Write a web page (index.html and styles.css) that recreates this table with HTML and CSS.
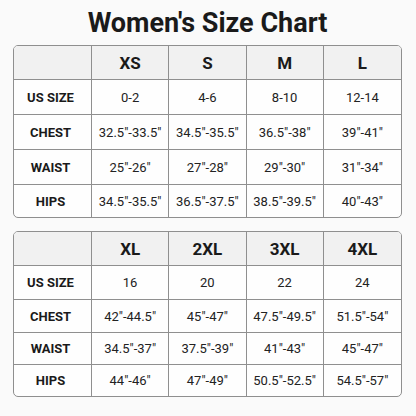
FILE: index.html
```html
<!DOCTYPE html>
<html>
<head>
<meta charset="utf-8">
<link rel="stylesheet" href="styles.css">
</head>
<body>
<div class="page">
  <h1 class="title">Women's Size Chart</h1>
  <div class="chart chart-a">
    <div class="cell head corner"></div>
    <div class="cell head">XS</div>
    <div class="cell head">S</div>
    <div class="cell head">M</div>
    <div class="cell head last">L</div>

    <div class="cell label">US SIZE</div>
    <div class="cell">0-2</div>
    <div class="cell">4-6</div>
    <div class="cell">8-10</div>
    <div class="cell last">12-14</div>

    <div class="cell label">CHEST</div>
    <div class="cell">32.5"-33.5"</div>
    <div class="cell">34.5"-35.5"</div>
    <div class="cell">36.5"-38"</div>
    <div class="cell last">39"-41"</div>

    <div class="cell label">WAIST</div>
    <div class="cell">25"-26"</div>
    <div class="cell">27"-28"</div>
    <div class="cell">29"-30"</div>
    <div class="cell last">31"-34"</div>

    <div class="cell label bottom">HIPS</div>
    <div class="cell bottom">34.5"-35.5"</div>
    <div class="cell bottom">36.5"-37.5"</div>
    <div class="cell bottom">38.5"-39.5"</div>
    <div class="cell bottom last">40"-43"</div>
  </div>

  <div class="chart chart-b">
    <div class="cell head corner"></div>
    <div class="cell head">XL</div>
    <div class="cell head">2XL</div>
    <div class="cell head">3XL</div>
    <div class="cell head last">4XL</div>

    <div class="cell label">US SIZE</div>
    <div class="cell">16</div>
    <div class="cell">20</div>
    <div class="cell">22</div>
    <div class="cell last">24</div>

    <div class="cell label">CHEST</div>
    <div class="cell">42"-44.5"</div>
    <div class="cell">45"-47"</div>
    <div class="cell">47.5"-49.5"</div>
    <div class="cell last">51.5"-54"</div>

    <div class="cell label">WAIST</div>
    <div class="cell">34.5"-37"</div>
    <div class="cell">37.5"-39"</div>
    <div class="cell">41"-43"</div>
    <div class="cell last">45"-47"</div>

    <div class="cell label bottom">HIPS</div>
    <div class="cell bottom">44"-46"</div>
    <div class="cell bottom">47"-49"</div>
    <div class="cell bottom">50.5"-52.5"</div>
    <div class="cell bottom last">54.5"-57"</div>
  </div>
</div>
</body>
</html>
```
FILE: styles.css
```css
html, body {
  margin: 0;
  padding: 0;
  background: #fafafa;
}
body {
  width: 416px;
  height: 416px;
  overflow: hidden;
  font-family: Roboto, "Liberation Sans", sans-serif;
  color: #1c1c1c;
}
.page {
  padding: 0 14px 0 13px;
  display: flex;
  flex-direction: column;
}
.title {
  margin: 0;
  height: 45px;
  display: flex;
  align-items: center;
  justify-content: center;
  font-size: 27px;
  font-weight: 700;
  color: #1a1a1a;
}
.chart {
  display: grid;
  grid-template-columns: 78px repeat(4, 1fr);
  border: 1.5px solid #8f8f8f;
  border-radius: 5px;
  overflow: hidden;
  background: #fefefe;
}
.chart-a {
  grid-template-rows: 34px 35px 35px 35px 32px;
}
.chart-b {
  margin-top: 13px;
  grid-template-rows: 34px 34px 33px 32px 31px;
}
.cell {
  display: flex;
  align-items: center;
  justify-content: center;
  border-right: 1.5px solid #8f8f8f;
  border-bottom: 1.5px solid #8f8f8f;
  font-size: 13px;
  color: #222;
  white-space: nowrap;
}
.cell.last { border-right: none; }
.cell.bottom { border-bottom: none; }
.head {
  background: #f1f1f1;
  font-size: 17px;
  font-weight: 700;
  color: #1a1a1a;
}
.label {
  font-weight: 700;
  font-size: 13px;
  color: #1a1a1a;
  padding-right: 4px;
}
```
